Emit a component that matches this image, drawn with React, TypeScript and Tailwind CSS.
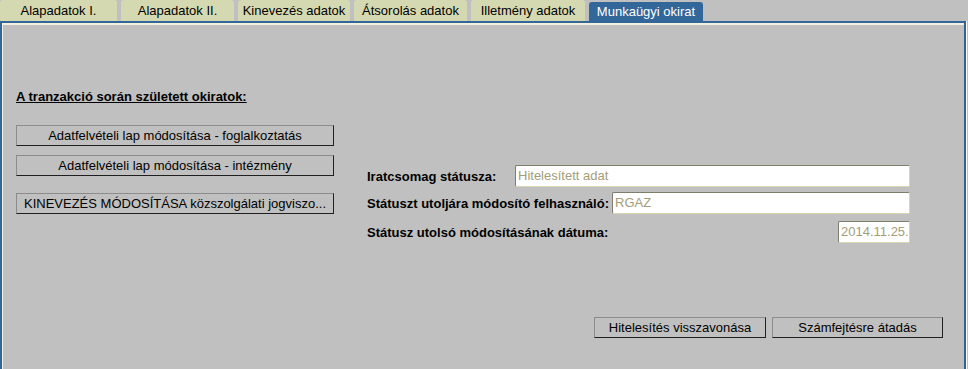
const tabs = [
  { label: "Alapadatok I.", width: "w-[117px]" },
  { label: "Alapadatok II.", width: "w-[113px]" },
  { label: "Kinevezés adatok", width: "w-[112px]" },
  { label: "Átsorolás adatok", width: "w-[113px]" },
  { label: "Illetmény adatok", width: "w-[114px]" },
];

const docButtons = [
  { label: "Adatfelvételi lap módosítása - foglalkoztatás", margin: "mt-[21px]" },
  { label: "Adatfelvételi lap módosítása - intézmény", margin: "mt-[9px]" },
  { label: "KINEVEZÉS MÓDOSÍTÁSA közszolgálati jogviszo...", margin: "mt-[17px]" },
];

function ClassicButton({ label, className }: { label: string; className: string }) {
  return (
    <button
      className={
        "h-[21px] bg-[#c0c0c0] border border-t-[#8c8c8c] border-l-[#8c8c8c] border-r-[#1f1f1f] border-b-[#1f1f1f] text-[13px] leading-none text-black " +
        className
      }
    >
      {label}
    </button>
  );
}

function Field({ value, className }: { value: string; className: string }) {
  return (
    <div
      className={
        "h-[22px] bg-white rounded-[2px] border border-t-[#7d7d6c] border-l-[#7d7d6c] border-r-[#d8d6b0] border-b-[#d8d6b0] flex items-center px-[2px] text-[13px] text-[#a39d78] " +
        className
      }
    >
      {value}
    </div>
  );
}

export default function App() {
  return (
    <div className="w-[968px] h-[369px] overflow-hidden bg-[#c0c0c0] font-['Liberation_Sans',Arial,sans-serif] text-[13px] text-black">
      <div className="flex items-end gap-[4px] h-[21px]">
        {tabs.map((tab) => (
          <div
            key={tab.label}
            className={"h-[21px] rounded-t-[3px] bg-[#d5d9b1] flex items-center justify-center " + tab.width}
          >
            {tab.label}
          </div>
        ))}
        <div className="w-[114px] h-[19px] rounded-t-[3px] bg-[#336699] text-white flex items-center justify-center">
          Munkaügyi okirat
        </div>
      </div>

      <div className="w-[966px] h-[348px] border-t-2 border-l-2 border-r-2 border-[#336699] border-r-[#2f6497] shadow-[1px_0_0_#ffffff]">
        <div className="h-full border-t-2 border-l border-[#f4f2df] pl-[13px] pr-[21px]">
          <div className="flex h-[292px]">
            <div className="w-[351px] flex flex-col pt-[64px]">
              <div className="font-bold underline leading-[15px] h-[15px]">
                A tranzakció során született okiratok:
              </div>
              {docButtons.map((b) => (
                <ClassicButton key={b.label} label={b.label} className={"w-[318px] " + b.margin} />
              ))}
            </div>

            <div className="w-[543px] flex flex-col pt-[140px] font-bold">
              <div className="flex items-center h-[22px]">
                <div className="w-[148px] pt-[2px]">Iratcsomag státusza:</div>
                <Field value="Hitelesített adat" className="w-[395px] font-normal" />
              </div>
              <div className="flex items-center h-[22px] mt-[5px]">
                <div className="w-[245px] pt-[2px]">Státuszt utoljára módosító felhasználó:</div>
                <Field value="RGAZ" className="w-[298px] font-normal" />
              </div>
              <div className="flex items-center justify-between h-[22px] mt-[7px]">
                <div className="pt-[2px]">Státusz utolsó módosításának dátuma:</div>
                <Field value="2014.11.25." className="w-[72px] font-normal text-[#9d9360] px-[1px]" />
              </div>
            </div>
          </div>

          <div className="flex justify-end gap-[6px]">
            <ClassicButton label="Hitelesítés visszavonása" className="w-[172px]" />
            <ClassicButton label="Számfejtésre átadás" className="w-[171px]" />
          </div>
        </div>
      </div>
    </div>
  );
}
